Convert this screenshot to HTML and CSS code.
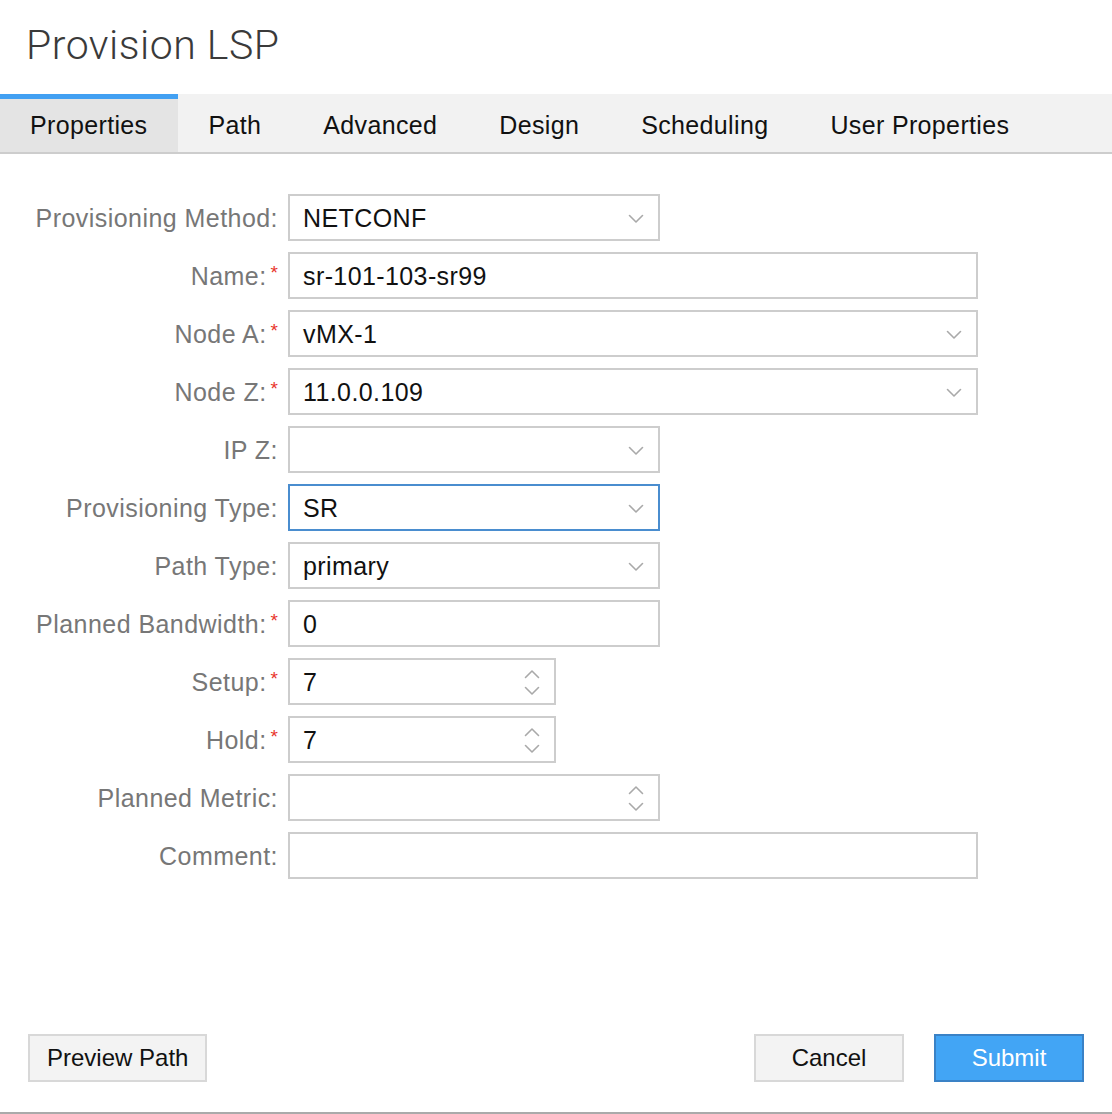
FILE: index.html
```html
<!DOCTYPE html>
<html>
<head>
<meta charset="utf-8">
<link rel="stylesheet" href="styles.css">
</head>
<body>
<div class="dialog">
  <h1 class="title">Provision LSP</h1>
  <div class="tabs">
    <div class="tab active">Properties</div>
    <div class="tab">Path</div>
    <div class="tab">Advanced</div>
    <div class="tab">Design</div>
    <div class="tab">Scheduling</div>
    <div class="tab">User Properties</div>
  </div>
  <div class="form">
    <div class="label">Provisioning Method:</div>
    <div class="field w-md select"><span>NETCONF</span><svg class="chev" viewBox="0 0 16 10"><polyline points="1.5,1.5 8,8 14.5,1.5"/></svg></div>

    <div class="label">Name:<span class="req">*</span></div>
    <div class="field w-lg"><span>sr-101-103-sr99</span></div>

    <div class="label">Node A:<span class="req">*</span></div>
    <div class="field w-lg select"><span>vMX-1</span><svg class="chev" viewBox="0 0 16 10"><polyline points="1.5,1.5 8,8 14.5,1.5"/></svg></div>

    <div class="label">Node Z:<span class="req">*</span></div>
    <div class="field w-lg select"><span>11.0.0.109</span><svg class="chev" viewBox="0 0 16 10"><polyline points="1.5,1.5 8,8 14.5,1.5"/></svg></div>

    <div class="label">IP Z:</div>
    <div class="field w-md select"><span></span><svg class="chev" viewBox="0 0 16 10"><polyline points="1.5,1.5 8,8 14.5,1.5"/></svg></div>

    <div class="label">Provisioning Type:</div>
    <div class="field w-md select focus"><span>SR</span><svg class="chev" viewBox="0 0 16 10"><polyline points="1.5,1.5 8,8 14.5,1.5"/></svg></div>

    <div class="label">Path Type:</div>
    <div class="field w-md select"><span>primary</span><svg class="chev" viewBox="0 0 16 10"><polyline points="1.5,1.5 8,8 14.5,1.5"/></svg></div>

    <div class="label">Planned Bandwidth:<span class="req">*</span></div>
    <div class="field w-md"><span>0</span></div>

    <div class="label">Setup:<span class="req">*</span></div>
    <div class="field w-sm"><span>7</span><span class="spin"><svg viewBox="0 0 16 10"><polyline points="1.5,8.5 8,2 14.5,8.5"/></svg><svg viewBox="0 0 16 10"><polyline points="1.5,1.5 8,8 14.5,1.5"/></svg></span></div>

    <div class="label">Hold:<span class="req">*</span></div>
    <div class="field w-sm"><span>7</span><span class="spin"><svg viewBox="0 0 16 10"><polyline points="1.5,8.5 8,2 14.5,8.5"/></svg><svg viewBox="0 0 16 10"><polyline points="1.5,1.5 8,8 14.5,1.5"/></svg></span></div>

    <div class="label">Planned Metric:</div>
    <div class="field w-md"><span></span><span class="spin"><svg viewBox="0 0 16 10"><polyline points="1.5,8.5 8,2 14.5,8.5"/></svg><svg viewBox="0 0 16 10"><polyline points="1.5,1.5 8,8 14.5,1.5"/></svg></span></div>

    <div class="label">Comment:</div>
    <div class="field w-lg"><span></span></div>
  </div>
  <div class="footer">
    <button class="btn">Preview Path</button>
    <div class="right">
      <button class="btn cancel">Cancel</button>
      <button class="btn primary">Submit</button>
    </div>
  </div>
</div>
</body>
</html>
```

FILE: styles.css
```css
html, body {
  margin: 0;
  padding: 0;
  background: #fff;
}
body {
  font-family: "Liberation Sans", Arial, sans-serif;
  color: #111;
}
.dialog {
  width: 1112px;
  height: 1114px;
  display: flex;
  flex-direction: column;
  box-sizing: border-box;
  border-bottom: 2px solid #aaaaaa;
}
.title {
  margin: 0;
  height: 94px;
  box-sizing: border-box;
  padding: 21px 0 0 26px;
  font-family: Roboto, "Liberation Sans", sans-serif;
  font-weight: 300;
  font-size: 41px;
  line-height: 48px;
  color: #3a3a3a;
  letter-spacing: 0.5px;
}
.tabs {
  display: flex;
  background: #f2f2f2;
  border-bottom: 2px solid #cdcdcd;
  height: 58px;
}
.tab {
  padding: 5px 32px 0 30px;
  display: flex;
  align-items: center;
  font-size: 25px;
  letter-spacing: 0.35px;
  color: #111;
}
.tab.active {
  background: #e4e4e4;
  box-shadow: inset 0 5px 0 #42a0f2;
  padding-right: 31px;
}
.form {
  display: grid;
  grid-template-columns: 278px auto;
  column-gap: 10px;
  row-gap: 11px;
  padding-top: 40px;
  justify-content: start;
}
.label {
  display: flex;
  justify-content: flex-end;
  align-items: center;
  font-size: 25px;
  letter-spacing: 0.45px;
  color: #777777;
  height: 47px;
  padding-top: 1px;
  box-sizing: border-box;
  white-space: nowrap;
}
.req {
  color: #e8352b;
  font-size: 19px;
  align-self: flex-start;
  margin-top: 9px;
  margin-left: 4px;
  letter-spacing: 0;
}
.field {
  box-sizing: border-box;
  height: 47px;
  border: 2px solid #cdcdcd;
  background: #fff;
  display: flex;
  align-items: center;
  justify-content: space-between;
  padding: 1px 14px 0 13px;
  font-size: 25px;
  letter-spacing: 0.4px;
  color: #111;
}
.field.focus {
  border-color: #4a8dcf;
}
.w-md { width: 372px; }
.w-lg { width: 690px; }
.w-sm { width: 268px; }
.chev {
  width: 16px;
  height: 10px;
  margin-top: 1px;
}
svg polyline {
  fill: none;
  stroke: #a9a9a9;
  stroke-width: 1.6;
  stroke-linecap: round;
  stroke-linejoin: round;
}
.spin {
  display: flex;
  flex-direction: column;
  gap: 7px;
}
.spin svg {
  width: 16px;
  height: 10px;
}
.footer {
  margin-top: auto;
  display: flex;
  justify-content: space-between;
  padding: 0 28px 30px 28px;
}
.right {
  display: flex;
  gap: 30px;
}
.btn {
  box-sizing: border-box;
  height: 48px;
  font-family: "Liberation Sans", Arial, sans-serif;
  font-size: 24px;
  background: #f3f3f3;
  border: 2px solid #d8d8d8;
  color: #111;
  padding: 0 17px;
  margin: 0;
}
.btn.cancel {
  width: 150px;
}
.btn.primary {
  width: 150px;
  background: #42a5f5;
  border-color: #3a82c6;
  color: #fff;
}
```
